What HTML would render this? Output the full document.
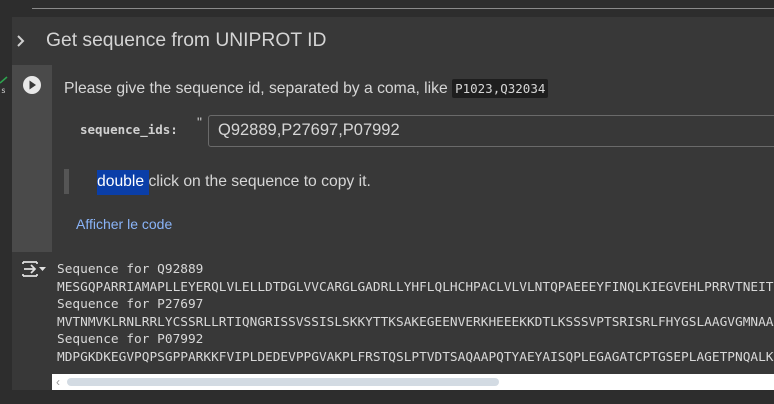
<!DOCTYPE html>
<html><head><meta charset="utf-8"><style>
html,body{margin:0;padding:0;width:774px;height:404px;overflow:hidden;background:#2d2d2d;font-family:"Liberation Sans",sans-serif;}
.abs{position:absolute;}
.mono{font-family:"DejaVu Sans Mono","Liberation Mono",monospace;}
</style></head><body>
<div class="abs" style="left:32px;top:8px;width:742px;height:1px;background:#8a8a8a"></div>
<div class="abs" style="left:12px;top:17px;width:762px;height:373px;background:#383838"></div>
<div class="abs" style="left:12px;top:65px;width:40px;height:187px;background:#4a4a4a"></div>
<svg class="abs" style="left:14px;top:33px" width="14" height="16"><path d="M4 3 L9 8 L4 13" stroke="#d0d0d0" stroke-width="2" fill="none"/></svg>
<div class="abs" style="left:46px;top:30px;font-size:19.3px;color:#d4d4d4">Get sequence from UNIPROT ID</div>
<svg class="abs" style="left:0px;top:74px" width="12" height="12"><path d="M0 9 L7 3" stroke="#2da44e" stroke-width="1.5"/></svg>
<div class="abs mono" style="left:1px;top:86px;font-size:8px;color:#ccc">s</div>
<svg class="abs" style="left:22px;top:75px" width="20" height="20"><circle cx="10" cy="10" r="9" fill="#e8e8e8"/><path d="M7.5 5.5 L14 10 L7.5 14.5Z" fill="#383838"/></svg>
<div class="abs" style="left:64px;top:80px;font-size:15.7px;color:#d6d6d6">Please give the sequence id, separated by a coma, like <span class="mono" style="background:#1e1e1e;font-size:12.5px;padding:2px 3px;border-radius:2px">P1023,Q32034</span></div>
<div class="abs mono" style="left:80px;top:122px;font-size:12.5px;font-weight:bold;color:#d0d0d0">sequence_ids:</div>
<div class="abs" style="left:197px;top:114px;font-size:14px;color:#ccc">"</div>
<div class="abs" style="left:208px;top:115px;width:570px;height:30px;border:1px solid #6a6a6a;border-radius:3px;background:#383838"></div>
<div class="abs" style="left:218px;top:121px;font-size:16.5px;color:#d6d6d6">Q92889,P27697,P07992</div>
<div class="abs" style="left:64px;top:169px;width:5px;height:25px;background:#555"></div>
<div class="abs" style="left:97px;top:170px;height:25px;width:52px;background:#0a3ea8"></div>
<div class="abs" style="left:97px;top:173px;font-size:15.7px;color:#d6d6d6"><span style="color:#fff">double</span> click on the sequence to copy it.</div>
<div class="abs" style="left:76px;top:216px;font-size:14px;color:#8ab4f8">Afficher le code</div>
<svg class="abs" style="left:21px;top:260px" width="26" height="18"><path d="M2 2 H16 M2 16 H16 M2 2 V4 M2 16 V14 M16 2 V4 M16 14 V16 M3 9 H14 M10 5 L14 9 L10 13" stroke="#e0e0e0" stroke-width="1.7" fill="none"/><path d="M18 7 H25 L21.5 11Z" fill="#e0e0e0"/></svg>
<div class="abs mono" style="left:57px;top:261px;font-size:12.8px;line-height:17.6px;color:#d8d8d8;white-space:pre">Sequence for Q92889
MESGQPARRIAMAPLLEYERQLVLELLDTDGLVVCARGLGADRLLYHFLQLHCHPACLVLVLNTQPAEEEYFINQLKIEGVEHLPRRVTNEITS
Sequence for P27697
MVTNMVKLRNLRRLYCSSRLLRTIQNGRISSVSSISLSKKYTTKSAKEGEENVERKHEEEKKDTLKSSSVPTSRISRLFHYGSLAAGVGMNAAA
Sequence for P07992
MDPGKDKEGVPQPSGPPARKKFVIPLDEDEVPPGVAKPLFRSTQSLPTVDTSAQAAPQTYAEYAISQPLEGAGATCPTGSEPLAGETPNQALKP</div>
<div class="abs" style="left:52px;top:374px;width:722px;height:16px;background:#fff"></div>
<div class="abs" style="left:56px;top:375px;font-size:12px;color:#999">‹</div>
<div class="abs" style="left:67px;top:378px;width:432px;height:8px;border-radius:4px;background:#d3dbe3"></div>
</body></html>
